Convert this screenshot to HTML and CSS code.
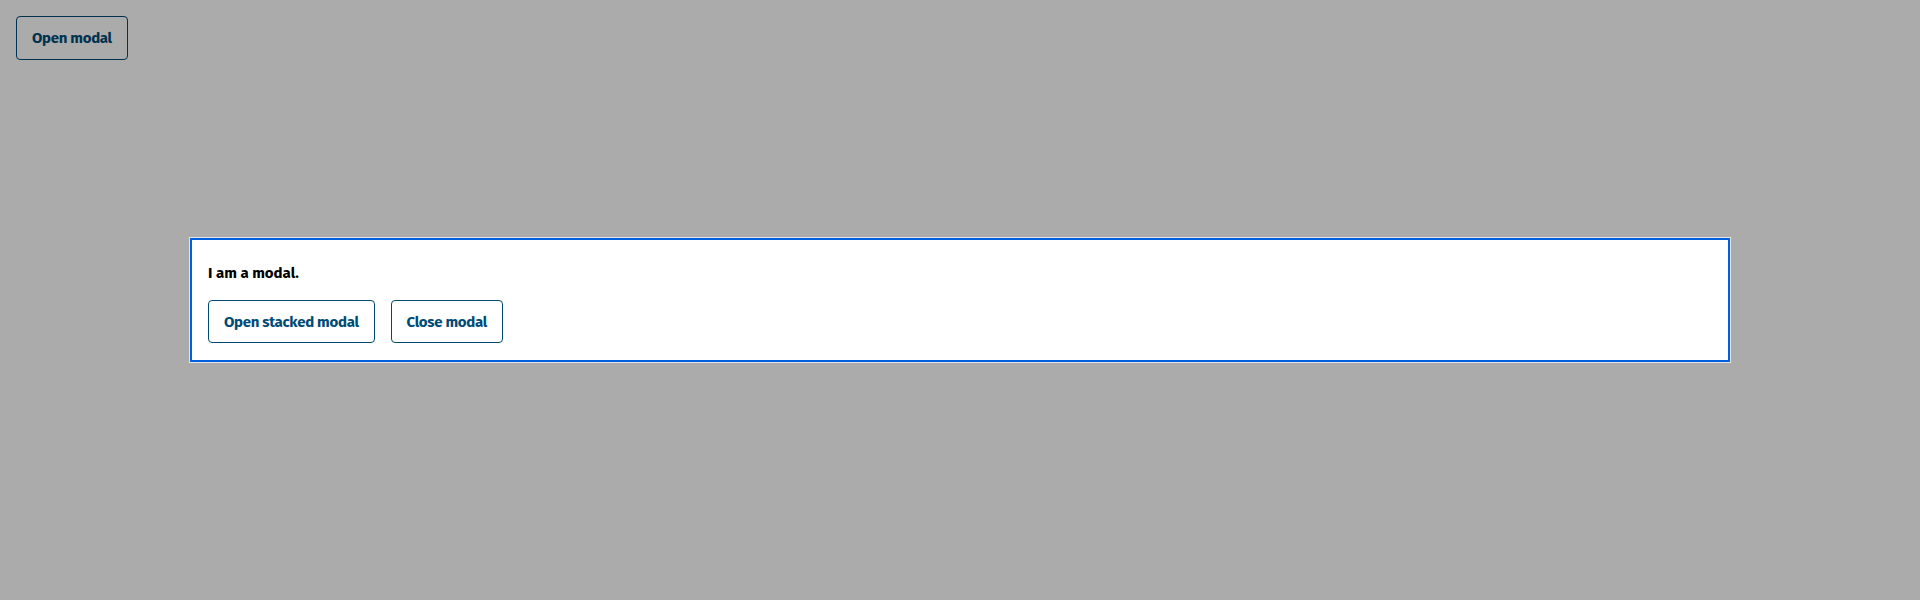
FILE: index.html
```html
<!DOCTYPE html>
<html lang="en">
<head>
<meta charset="utf-8">
<title>Modal</title>
<link rel="stylesheet" href="styles.css">
</head>
<body>
<div class="page">
  <button class="btn btn-dim">Open modal</button>
</div>
<div class="overlay">
  <div class="modal" role="dialog">
    <p class="modal-text">I am a modal.</p>
    <div class="actions">
      <button class="btn">Open stacked modal</button>
      <button class="btn">Close modal</button>
    </div>
  </div>
</div>
</body>
</html>
```
FILE: styles.css
```css
html, body {
  margin: 0;
  padding: 0;
  height: 100%;
}
body {
  background: #ababab;
  font-family: "Fira Sans", "Lato", "Noto Sans", sans-serif;
  position: relative;
}
.page {
  padding: 16px;
}
.btn {
  font-family: inherit;
  font-size: 15px;
  letter-spacing: -0.3px;
  font-weight: 700;
  height: 44px;
  padding: 0 15px;
  border-radius: 4px;
  border: 1px solid #004b76;
  color: #004b76;
  background: #ffffff;
  cursor: pointer;
}
.btn-dim {
  background: transparent;
  color: #00324f;
  border-color: #00324f;
}
.overlay {
  position: absolute;
  inset: 0;
  display: flex;
  align-items: center;
  justify-content: center;
}
.modal {
  width: 1542px;
  box-sizing: border-box;
  background: #fff;
  border: 1px solid #e4e4e4;
  box-shadow: inset 0 0 0 2px #0060df;
  padding: 16px 18px 19px;
}
.modal-text {
  margin: 0 0 15px;
  font-size: 15px;
  font-weight: 700;
  line-height: 24px;
  color: #000;
  padding-top: 7px;
}
.actions {
  display: flex;
  gap: 16px;
}
.actions .btn {
  height: 43px;
}
```
